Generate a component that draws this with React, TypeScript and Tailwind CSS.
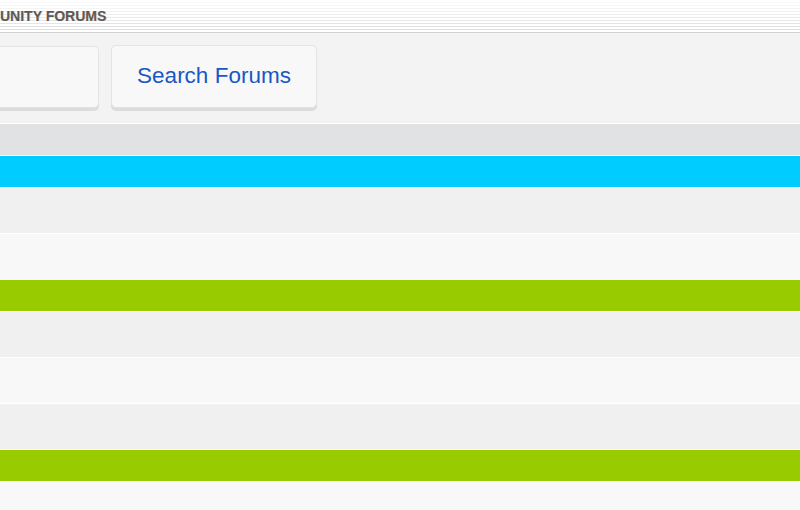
export default function App() {
  return (
    <div className="w-[800px] h-[510px] overflow-hidden bg-[#f3f3f3] font-['Liberation_Sans',Arial,sans-serif]">
      {/* striped title bar */}
      <div className="relative h-[33px] border-b border-[#cfcfcf] bg-[repeating-linear-gradient(to_bottom,#ffffff_0px,#ffffff_2px,#dcdcdc_2px,#dcdcdc_3px)]">
        <div className="absolute inset-0 bg-[linear-gradient(to_bottom,rgba(255,255,255,0.95),rgba(255,255,255,0.5)_45%,rgba(255,255,255,0))]" />
        <div className="relative pt-[8px] text-[14px] font-bold leading-[17px] text-[#5a5a5a] [text-shadow:1px_0_0_rgba(200,140,80,0.35)]">
          UNITY FORUMS
        </div>
      </div>
      <div className="h-px bg-[#f7f7f7]" />

      {/* buttons */}
      <div className="flex items-start gap-3 h-[89px] pt-[12px]">
        <div className="w-[100px] h-[62px] -ml-px rounded-r-[5px] border border-l-0 border-[#e3e3e3] bg-[#f8f8f8] shadow-[0_3px_0_#dcdcdc]" />
        <button className="w-[206px] h-[63px] -mt-px rounded-[5px] border border-[#e3e3e3] bg-[#f8f8f8] shadow-[0_3px_0_#dcdcdc] text-[22.5px] text-[#1b57c2] leading-none pb-[1px]">
          Search Forums
        </button>
      </div>

      <div className="h-px bg-white" />
      {/* list */}
      <div className="flex flex-col">
        <div className="h-[32px] bg-[#e1e2e4] border-b border-white" />
        <div className="h-[32px] bg-[#00ccff] border-b border-white" />
        <div className="h-[46px] bg-[#f0f0f0] border-b border-white" />
        <div className="h-[46px] bg-[#f8f8f8]" />
        <div className="h-[32px] bg-[#99cc00] border-b border-white" />
        <div className="h-[46px] bg-[#f0f0f0] border-b border-white" />
        <div className="h-[46px] bg-[#f8f8f8] border-b border-white" />
        <div className="h-[46px] bg-[#f0f0f0] border-b border-white" />
        <div className="h-[31px] bg-[#99cc00]" />
        <div className="h-[40px] bg-[#f8f8f8]" />
      </div>
    </div>
  );
}
